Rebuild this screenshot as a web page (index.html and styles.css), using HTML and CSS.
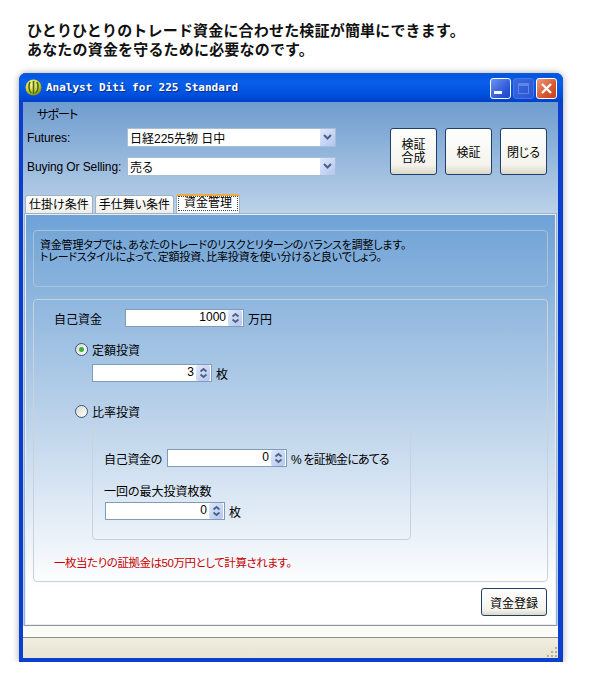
FILE: index.html
```html
<!DOCTYPE html>
<html lang="ja">
<head>
  <meta charset="UTF-8">
  <title>Analyst Diti for 225 Standard</title>
  <link rel="stylesheet" href="styles.css">
</head>
<body>
  <div class="intro">
    <p>ひとりひとりのトレード資金に合わせた検証が簡単にできます。</p>
    <p>あなたの資金を守るために必要なのです。</p>
  </div>

  <div class="window">
    <div class="titlebar">
      <svg class="app-icon" width="17" height="17" viewBox="0 0 17 17">
        <defs>
          <radialGradient id="ball" cx="0.4" cy="0.3" r="0.8">
            <stop offset="0" stop-color="#f6f7a0"/>
            <stop offset="0.55" stop-color="#d8d020"/>
            <stop offset="1" stop-color="#4f7a1c"/>
          </radialGradient>
        </defs>
        <circle cx="8.5" cy="8.5" r="8" fill="url(#ball)"/>
        <path d="M5 3c-2 4-1 9 1.500 11M8.500 2v13M12 3c2 4 1 9-1.500 11" fill="none" stroke="#3f6a20" stroke-width="1.600"/>
      </svg>
      <span class="title-text">Analyst Diti for 225 Standard</span>
      <div class="win-buttons">
        <div class="win-btn"><span class="min-mark"></span></div>
        <div class="win-btn disabled"><span class="max-mark"></span></div>
        <div class="win-btn close">
          <svg width="13" height="13" viewBox="0 0 13 13"><path d="M2 2l9 9M11 2l-9 9" stroke="#fff" stroke-width="2.400"/></svg>
        </div>
      </div>
    </div>

    <div class="client">
      <div class="menu">サポート</div>

      <div class="top-row">
        <div class="selectors">
          <div class="select-row">
            <label>Futures:</label>
            <div class="select">
              <span class="select-value">日経225先物 日中</span>
              <span class="select-arrow"><svg width="9" height="7" viewBox="0 0 9 7"><path d="M1 1l3.500 3.500L8 1" fill="none" stroke="#4d6185" stroke-width="2"/></svg></span>
            </div>
          </div>
          <div class="select-row">
            <label>Buying Or Selling:</label>
            <div class="select">
              <span class="select-value">売る</span>
              <span class="select-arrow"><svg width="9" height="7" viewBox="0 0 9 7"><path d="M1 1l3.500 3.500L8 1" fill="none" stroke="#4d6185" stroke-width="2"/></svg></span>
            </div>
          </div>
        </div>
        <div class="actions">
          <button class="btn square two-line">検証<br>合成</button>
          <button class="btn square">検証</button>
          <button class="btn square">閉じる</button>
        </div>
      </div>

      <div class="tabs">
        <div class="tab">仕掛け条件</div>
        <div class="tab">手仕舞い条件</div>
        <div class="tab active"><span class="tab-focus">資金管理</span></div>
      </div>

      <div class="panel">
        <div class="info-box">
          <p>資金管理タブでは、あなたのトレードのリスクとリターンのバランスを調整します。</p>
          <p>トレードスタイルによって、定額投資、比率投資を使い分けると良いでしょう。</p>
        </div>

        <div class="money-group">
          <div class="row">
            <span class="own-label">自己資金</span>
            <div class="spin wide"><span class="spin-value">1000</span><span class="spin-btn"><svg width="9" height="12" viewBox="0 0 9 12"><path d="M1.500 4.500L4.500 2l3 2.500M1.500 7.500l3 2.500 3-2.500" fill="none" stroke="#4d6185" stroke-width="1.800"/></svg></span></div>
            <span class="unit">万円</span>
          </div>

          <div class="radio-row first">
            <span class="radio checked"></span>
            <span>定額投資</span>
          </div>
          <div class="row fixed-row">
            <div class="spin"><span class="spin-value">3</span><span class="spin-btn"><svg width="9" height="12" viewBox="0 0 9 12"><path d="M1.500 4.500L4.500 2l3 2.500M1.500 7.500l3 2.500 3-2.500" fill="none" stroke="#4d6185" stroke-width="1.800"/></svg></span></div>
            <span class="unit">枚</span>
          </div>

          <div class="radio-row second">
            <span class="radio"></span>
            <span>比率投資</span>
          </div>

          <div class="ratio-box">
            <div class="row">
              <span class="ratio-label">自己資金の</span>
              <div class="spin"><span class="spin-value">0</span><span class="spin-btn"><svg width="9" height="12" viewBox="0 0 9 12"><path d="M1.500 4.500L4.500 2l3 2.500M1.500 7.500l3 2.500 3-2.500" fill="none" stroke="#4d6185" stroke-width="1.800"/></svg></span></div>
              <span class="unit ratio-unit">% を証拠金にあてる</span>
            </div>
            <div class="max-label">一回の最大投資枚数</div>
            <div class="row max-row">
              <div class="spin"><span class="spin-value">0</span><span class="spin-btn"><svg width="9" height="12" viewBox="0 0 9 12"><path d="M1.500 4.500L4.500 2l3 2.500M1.500 7.500l3 2.500 3-2.500" fill="none" stroke="#4d6185" stroke-width="1.800"/></svg></span></div>
              <span class="unit">枚</span>
            </div>
          </div>

          <p class="note">一枚当たりの証拠金は50万円として計算されます。</p>
        </div>

        <div class="panel-footer">
          <button class="btn register">資金登録</button>
        </div>
      </div>

      <div class="strip"></div>
      <div class="statusbar">
        <svg width="12" height="12" viewBox="0 0 12 12" fill="#b3ae98">
          <rect x="9" y="1" width="2" height="2"/>
          <rect x="9" y="5" width="2" height="2"/>
          <rect x="5" y="5" width="2" height="2"/>
          <rect x="9" y="9" width="2" height="2"/>
          <rect x="5" y="9" width="2" height="2"/>
          <rect x="1" y="9" width="2" height="2"/>
        </svg>
      </div>
    </div>
  </div>
</body>
</html>
```

FILE: styles.css
```css
:root {
  --ui-font: "Liberation Sans", "Noto Sans CJK JP", sans-serif;
  --line-light: #c8d2dc;
  --field-border: #7f9db9;
  --btn-border: #1f3f66;
}

body {
  margin: 0;
  background: #ffffff;
  color: #000000;
  font-family: var(--ui-font);
  font-size: 12px;
  font-feature-settings: "palt";
}

p {
  margin: 0;
}

.intro {
  height: 73px;
  padding: 20px 0 0 27px;
  box-sizing: border-box;
  font-family: "Noto Sans CJK JP", sans-serif;
  font-size: 15px;
  font-weight: 700;
  line-height: 19px;
  letter-spacing: 0.18px;
  color: #111111;
}

.intro p {
  font-feature-settings: normal;
}

.window {
  width: 544px;
  height: 589px;
  margin-left: 19px;
  box-sizing: border-box;
  display: flex;
  flex-direction: column;
  padding: 0 5px 4px 4px;
  background: #0a3fd0;
  border-radius: 7px 7px 0 0;
  box-shadow: 0 0 7px rgba(0, 0, 0, 0.35);
}

.titlebar {
  height: 29px;
  flex: none;
  margin: 0 -5px 0 -4px;
  padding: 0 6px;
  display: flex;
  align-items: center;
  background: linear-gradient(#0a5be0 0, #0056e0 10%, #0a5fea 30%, #0052e0 70%, #0040c8 100%);
  border-radius: 7px 7px 0 0;
}

.app-icon {
  flex: none;
  margin-right: 4px;
}

.title-text {
  flex: 1;
  font-family: "DejaVu Sans Mono", monospace;
  font-size: 11px;
  font-weight: 700;
  color: #ffffff;
  text-shadow: 1px 1px 1px #0a2a80;
  white-space: pre;
  font-feature-settings: normal;
  margin-top: -1px;
}

.win-buttons {
  display: flex;
  gap: 2px;
  margin-top: 1px;
}

.win-btn {
  width: 21px;
  height: 21px;
  box-sizing: border-box;
  display: flex;
  align-items: center;
  justify-content: center;
  border: 1px solid #ffffff;
  border-radius: 3px;
  background: linear-gradient(135deg, #6c93ee, #2a55d8 70%, #1f45c4);
}

.min-mark {
  width: 8px;
  height: 3px;
  margin: 9px 6px 0 0;
  background: #ffffff;
}

.win-btn.disabled {
  border-color: #4a76e4;
  background: linear-gradient(135deg, #3a68de, #2a55cf);
}

.max-mark {
  width: 11px;
  height: 11px;
  box-sizing: border-box;
  border: 1px solid #5f86e6;
  border-top-width: 3px;
}

.win-btn.close {
  background: linear-gradient(135deg, #ec9a7c, #d9572e 60%, #c7401c);
}

.client {
  flex: 1;
  display: flex;
  flex-direction: column;
  min-height: 0;
  background: linear-gradient(#6f9dcf 0, #bcd2e9 111px, #bcd2e9 100%);
}

.menu {
  height: 26px;
  flex: none;
  padding-left: 14px;
  line-height: 26px;
  box-sizing: border-box;
  letter-spacing: -0.9px;
}

.top-row {
  display: flex;
  height: 47px;
  padding-left: 4px;
}

.selectors {
  width: 309px;
  display: flex;
  flex-direction: column;
  gap: 10px;
}

.select-row {
  display: flex;
  align-items: center;
  height: 19px;
}

.select-row label {
  width: 100px;
  flex: none;
  letter-spacing: -0.1px;
}

.select {
  flex: 1;
  height: 19px;
  display: flex;
  align-items: center;
  box-sizing: border-box;
  background: #ffffff;
  padding-left: 2px;
  border: 1px solid #a8bdd6;
}

.select-value {
  flex: 1;
}

.select-arrow {
  width: 15px;
  height: 17px;
  display: flex;
  align-items: center;
  justify-content: center;
  background: linear-gradient(135deg, #dfe8fb, #b4c6f0);
}

.actions {
  display: flex;
  gap: 8px;
  margin-left: 54px;
}

.btn {
  box-sizing: border-box;
  padding: 0;
  font-family: var(--ui-font);
  font-size: 12px;
  font-feature-settings: "palt";
  color: #000000;
  border: 1px solid var(--btn-border);
  border-radius: 3px;
  background: linear-gradient(#ffffff, #f4f3ec 80%, #dcd8c8);
}

.btn.square {
  width: 47px;
  height: 47px;
}

.two-line {
  line-height: 13px;
}

.tabs {
  display: flex;
  gap: 2px;
  height: 19px;
  flex: none;
  margin-top: 19px;
  padding-left: 2px;
  align-items: flex-end;
}

.tab {
  height: 18px;
  padding: 0 3px;
  line-height: 18px;
  box-sizing: border-box;
  background: linear-gradient(#ffffff, #f0efe6);
  border: 1px solid #9fb2c8;
  border-bottom: none;
  border-radius: 3px 3px 0 0;
}

.tab.active {
  height: 19px;
  padding: 0 1px;
  line-height: 15px;
  background: #ffffff;
  border-top: 2px solid #f0a93a;
}

.tab-focus {
  display: inline-block;
  padding: 0 6px;
  outline: 1px dotted #444444;
  outline-offset: -1px;
}

.panel {
  height: 413px;
  flex: none;
  margin: 0 1px;
  padding: 16px 8px 0;
  box-sizing: border-box;
  border: 1px solid #9cb3ca;
  border-bottom-color: #8e9499;
  background: linear-gradient(#6ea2d6 0, #bcd3ea 50%, #ffffff 91%);
  box-shadow: inset 0 0 0 1px #e7eef5;
}

.info-box {
  height: 57px;
  box-sizing: border-box;
  padding: 8px 6px 0;
  font-size: 11px;
  letter-spacing: -0.2px;
  line-height: 12px;
  border: 1px solid #a9c3dc;
  border-radius: 4px;
  white-space: nowrap;
}

.money-group {
  height: 283px;
  margin-top: 12px;
  padding: 9px 20px 0;
  box-sizing: border-box;
  border: 1px solid var(--line-light);
  border-radius: 4px;
}

.row {
  display: flex;
  align-items: center;
  height: 18px;
}

.own-label {
  width: 71px;
  flex: none;
}

.ratio-label {
  width: 63px;
  flex: none;
  letter-spacing: -0.3px;
}

.spin {
  width: 120px;
  height: 18px;
  flex: none;
  box-sizing: border-box;
  display: flex;
  align-items: center;
  background: #ffffff;
  border: 1px solid var(--field-border);
  padding-right: 1px;
}

.spin.wide {
  width: 119px;
}

.spin-value {
  flex: 1;
  text-align: right;
  padding-right: 2px;
  margin-top: -3px;
}

.spin-btn {
  width: 14px;
  height: 16px;
  display: flex;
  align-items: center;
  justify-content: center;
  background: linear-gradient(135deg, #dfe8fb, #b4c6f0);
  border-radius: 2px;
}

.unit {
  margin-left: 4px;
  white-space: nowrap;
}

.ratio-unit {
  letter-spacing: -0.8px;
}

.radio-row {
  display: flex;
  align-items: center;
  height: 14px;
  margin-left: 21px;
  gap: 4px;
}

.radio-row.first {
  margin-top: 15px;
}

.radio-row.second {
  margin-top: 22px;
}

.radio {
  width: 13px;
  height: 13px;
  flex: none;
  box-sizing: border-box;
  display: flex;
  align-items: center;
  justify-content: center;
  border: 1px solid #345a82;
  border-radius: 50%;
  background: linear-gradient(135deg, #dcd9ce, #ffffff);
}

.radio.checked::after {
  content: "";
  width: 5px;
  height: 5px;
  border-radius: 50%;
  background: #3fae3f;
}

.fixed-row {
  margin: 8px 0 0 38px;
}

.ratio-box {
  width: 319px;
  height: 111px;
  margin: 11px 0 0 38px;
  padding: 19px 11px 0;
  box-sizing: border-box;
  border: 1px solid var(--line-light);
  border-radius: 4px;
}

.max-label {
  height: 14px;
  line-height: 14px;
  margin-top: 18px;
}

.max-row {
  margin: 3px 0 0 1px;
}

.note {
  height: 14px;
  line-height: 14px;
  margin-top: 16px;
  font-size: 11.500px;
  letter-spacing: -0.45px;
  color: #c80000;
}

.panel-footer {
  display: flex;
  justify-content: flex-end;
  padding: 6px 1px 0 0;
}

.btn.register {
  width: 66px;
  height: 28px;
}

.strip {
  height: 11px;
  flex: none;
  background: #fbfbf8;
  border-bottom: 1px solid #8e8e88;
}

.statusbar {
  flex: 1;
  display: flex;
  align-items: flex-end;
  justify-content: flex-end;
  background: linear-gradient(#f0ecdf, #e9e5d4);
}
```
